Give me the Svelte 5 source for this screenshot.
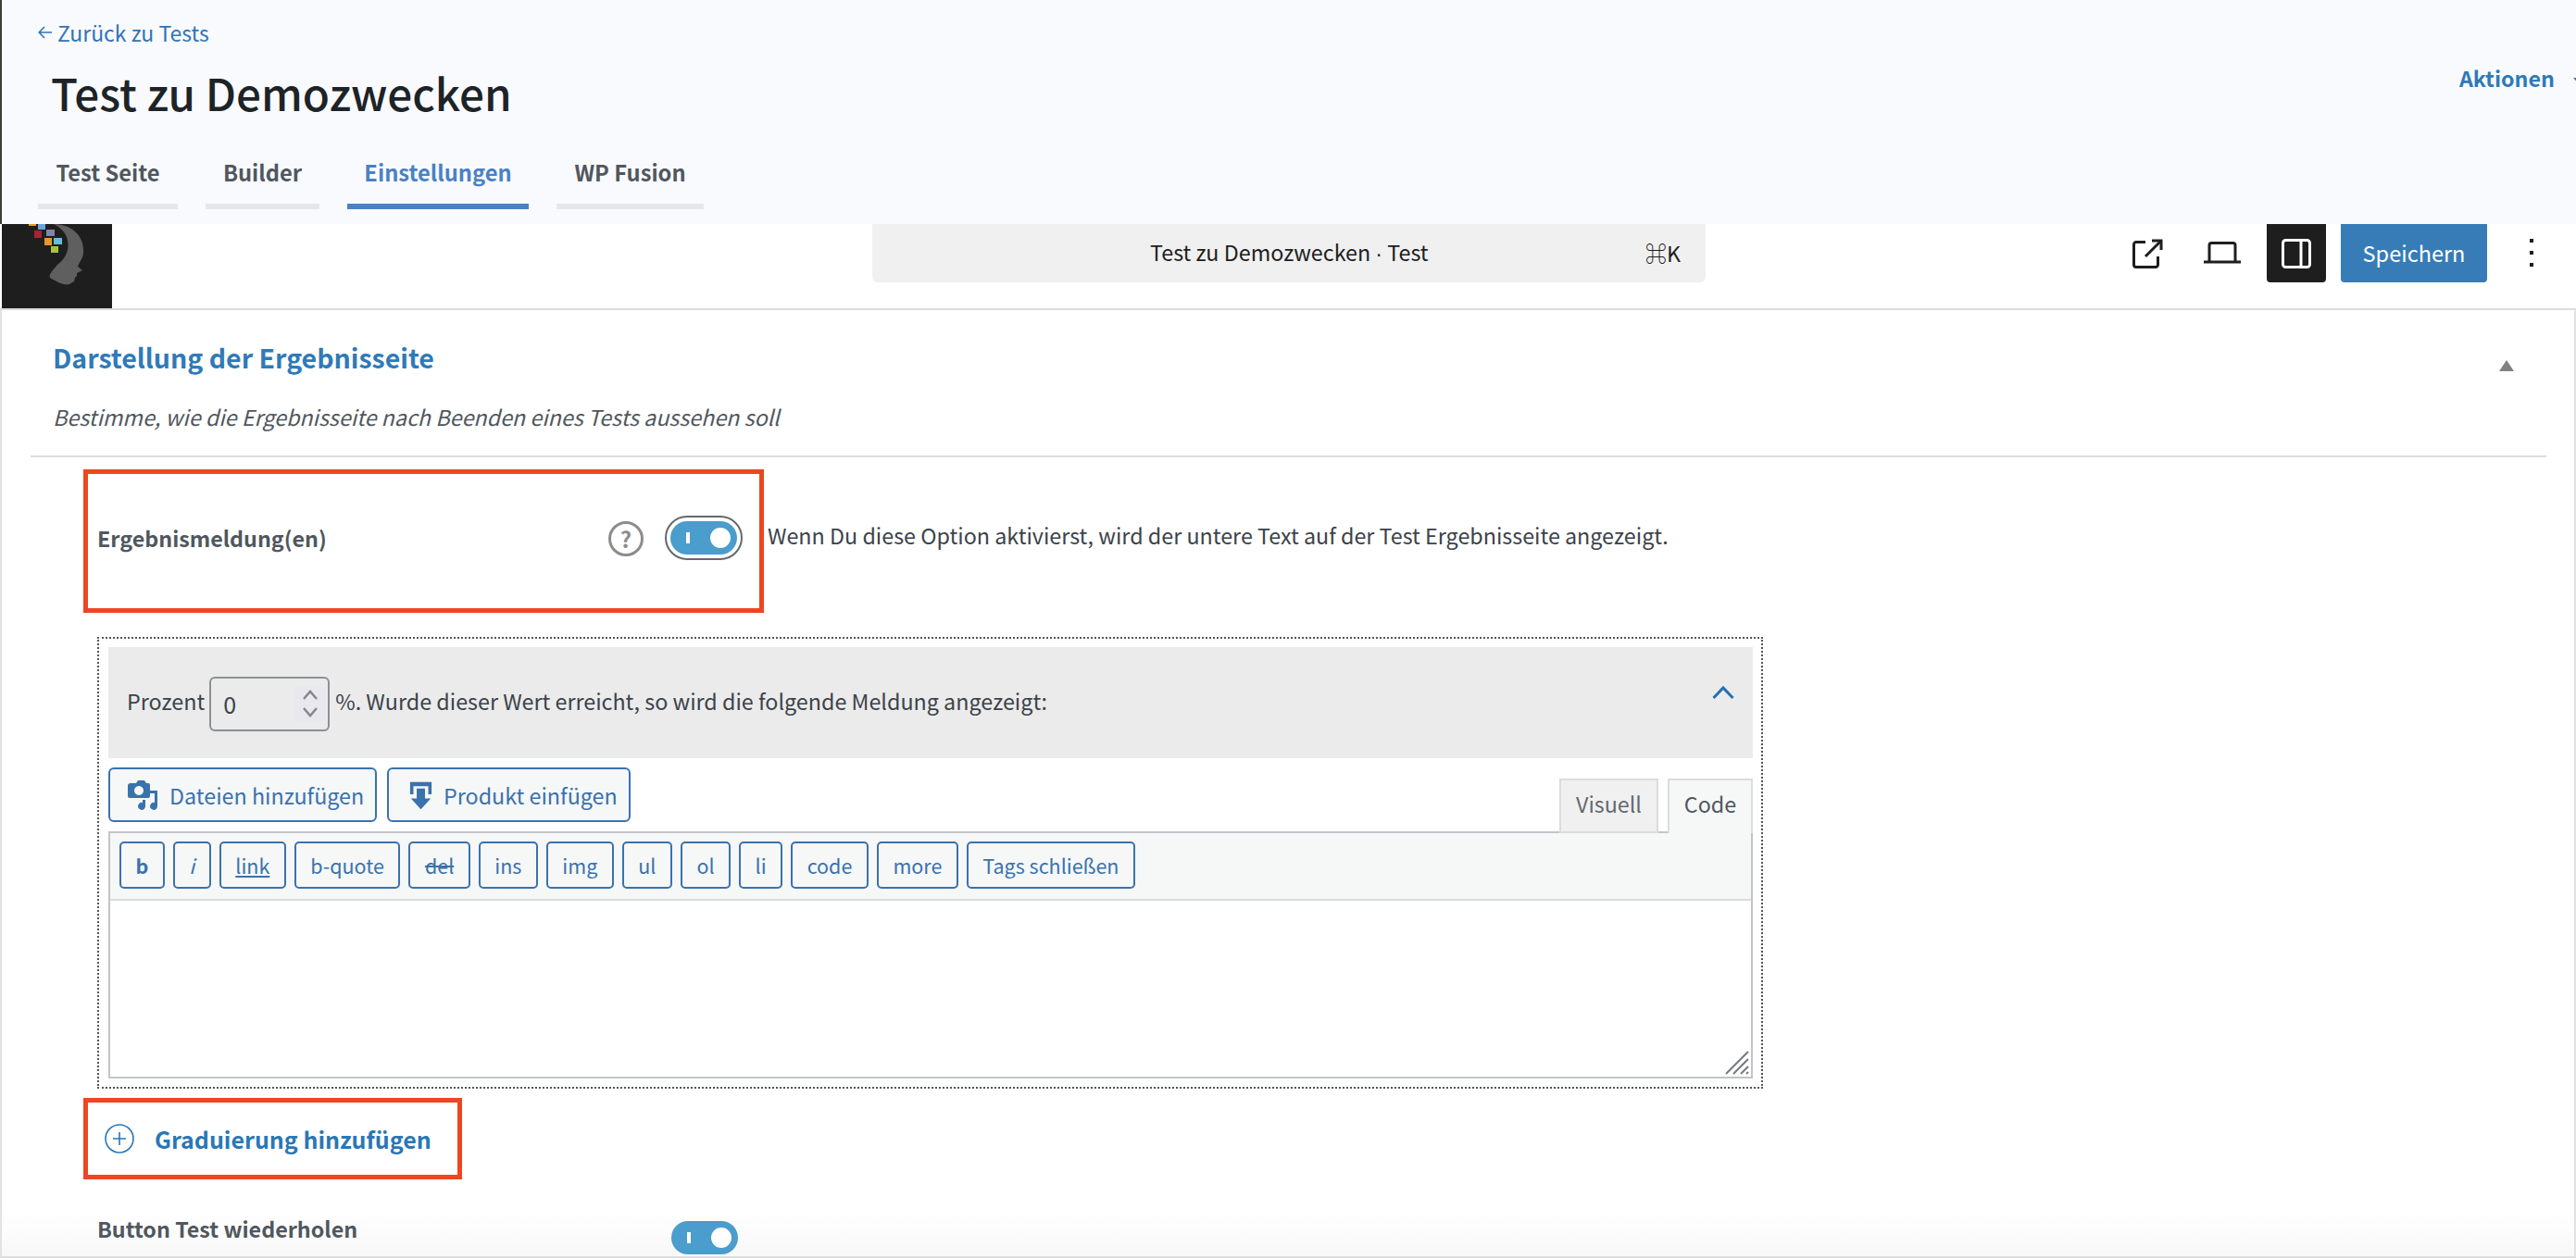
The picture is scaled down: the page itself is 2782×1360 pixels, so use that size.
<script>
  const tabs = [
    { label: "Test Seite", w: 151 },
    { label: "Builder", w: 123 },
    { label: "Einstellungen", w: 196, active: true },
    { label: "WP Fusion", w: 159 }
  ];
  const quicktags = ["b", "i", "link", "b-quote", "del", "ins", "img", "ul", "ol", "li", "code", "more", "Tags schließen"];
</script>

<div class="page">
  <header class="head">
    <a class="back" href="#back">
      <svg width="15" height="14" viewBox="0 0 15 14" fill="none" stroke="#2f75b5" stroke-width="1.6">
        <path d="M7 1 L1.2 7 L7 13 M1.2 7 H15"/>
      </svg>
      Zurück zu Tests
    </a>
    <div class="titlerow">
      <h1>Test zu Demozwecken</h1>
      <a class="actions" href="#actions">Aktionen<span class="caret"></span></a>
    </div>
    <nav class="tabs">
      {#each tabs as t}
        <a href="#tab" class="tab" class:active={t.active} style="width:{t.w}px">{t.label}</a>
      {/each}
    </nav>
  </header>

  <div class="topbar">
    <div class="logo">
      <svg width="119" height="91" viewBox="2 0 119 91">
        <path d="M58 0 C74 0 90 10 90 28 C91 36 86 40 84 46 L89 50 L83 53 L83 56 L81 58 L80 62 L75 65 C70 67 60 62 54 58 C52 55 57 50 62 44 C72 36 76 26 72 14 C70 8 64 3 58 0 Z" fill="#5f5f5f"/>
        <rect x="31" y="0" width="8" height="2" fill="#e59a35"/>
        <rect x="41" y="0" width="8" height="6" fill="#6fa3d8"/>
        <rect x="37" y="7" width="8" height="8" fill="#a5242f"/>
        <rect x="50" y="6" width="9" height="7" fill="#8484a8"/>
        <rect x="48" y="15" width="8" height="8" fill="#e5962f"/>
        <rect x="58" y="15" width="9" height="7" fill="#63bddd"/>
        <rect x="55" y="24" width="8" height="7" fill="#a9c23f"/>
      </svg>
    </div>
    <div class="search">
      <span class="searchtext">Test zu Demozwecken <span class="sep">·</span> Test</span>
      <span class="kbd">⌘K</span>
    </div>
    <div class="tools">
      <svg class="ext" width="34" height="34" viewBox="0 0 34 34" fill="none" stroke="#1e1e1e" stroke-width="3">
        <path d="M15 4.5 H5 a2.5 2.5 0 0 0 -2.5 2.5 V29 a2.5 2.5 0 0 0 2.5 2.5 H26 a2.5 2.5 0 0 0 2.5 -2.5 V20"/>
        <path d="M22 3 H32 V13"/>
        <path d="M31.5 3.5 L15 20"/>
      </svg>
      <svg class="laptop" width="40" height="24" viewBox="0 0 40 24" fill="none" stroke="#1e1e1e" stroke-width="3">
        <path d="M6 21 V4 a2.5 2.5 0 0 1 2.5 -2.5 H31.5 a2.5 2.5 0 0 1 2.5 2.5 V21"/>
        <path d="M0 22 H40"/>
      </svg>
      <button class="panelbtn" aria-label="Einstellungen">
        <svg width="32" height="32" viewBox="0 0 32 32" fill="none" stroke="#fff" stroke-width="3">
          <rect x="1.5" y="1.5" width="29" height="29" rx="3"/>
          <path d="M21 2 V30"/>
        </svg>
      </button>
      <button class="save">Speichern</button>
      <div class="dots"><i></i><i></i><i></i></div>
    </div>
  </div>

  <main class="panel">
    <div class="sectionhead">
      <div>
        <h2>Darstellung der Ergebnisseite</h2>
        <p class="sub">Bestimme, wie die Ergebnisseite nach Beenden eines Tests aussehen soll</p>
      </div>
      <span class="tri"></span>
    </div>

    <div class="content">
      <div class="setting">
        <div class="redbox first">
          <span class="label">Ergebnismeldung(en)</span>
          <span class="help">?</span>
          <span class="toggle ring"><span class="track"><i></i><b></b></span></span>
        </div>
        <span class="desc">Wenn Du diese Option aktivierst, wird der untere Text auf der Test Ergebnisseite angezeigt.</span>
      </div>

      <div class="dotted">
        <div class="greybar">
          <span>Prozent</span>
          <div class="num">
            <span>0</span>
            <div class="spin">
              <svg width="20" height="34" viewBox="0 0 20 34" fill="none" stroke="#85878b" stroke-width="2.5">
                <path d="M3 12 L10 4 L17 12"/>
                <path d="M3 22 L10 30 L17 22"/>
              </svg>
            </div>
          </div>
          <span>%. Wurde dieser Wert erreicht, so wird die folgende Meldung angezeigt:</span>
          <svg class="up" width="24" height="16" viewBox="0 0 24 16" fill="none" stroke="#2271b1" stroke-width="3">
            <path d="M1.5 14 L12 3 L22.5 14"/>
          </svg>
        </div>

        <div class="editorhead">
          <button class="media">
            <svg width="34" height="34" viewBox="0 0 34 34" fill="#3a72ad">
              <path d="M6 4 H10 L12 1 H19 L21 4 H23 a2 2 0 0 1 2 2 V18 a2 2 0 0 1 -2 2 H3 a2 2 0 0 1 -2 -2 V6 a3 3 0 0 1 3 -2 Z M13 7 a5 5 0 1 0 0.01 0 Z" fill-rule="evenodd"/>
              <path d="M25 12 H33 V29 a4 4 0 1 1 -3 -4 V15 H25 Z"/>
              <path d="M20 22 V29 a4 4 0 1 1 -3 -4 V22 Z"/>
            </svg>
            Dateien hinzufügen
          </button>
          <button class="media prod">
            <svg width="25" height="32" viewBox="0 0 28 34" fill="#3a72ad">
              <path d="M1 1 H27 V16 H23 V6 H5 V16 H1 Z"/>
              <path d="M9 9 H19 V21 H26 L14 34 L2 21 H9 Z"/>
            </svg>
            Produkt einfügen
          </button>
          <div class="modes">
            <span class="mode">Visuell</span>
            <span class="mode cur">Code</span>
          </div>
        </div>

        <div class="editor">
          <div class="qt">
            {#each quicktags as q}
              <button class="qbtn q-{q.split(' ')[0]}">{q}</button>
            {/each}
          </div>
          <div class="area">
            <svg class="grip" width="26" height="26" viewBox="0 0 26 26" stroke="#77797c" stroke-width="2">
              <path d="M1 25 L25 1 M9 25 L25 9 M17 25 L25 17 M23 25 L25 23"/>
            </svg>
          </div>
        </div>
      </div>

      <div class="redbox second">
        <svg width="32" height="32" viewBox="0 0 32 32" fill="none" stroke="#2a77b5" stroke-width="1.6">
          <circle cx="16" cy="16" r="15"/>
          <path d="M16 9 V23 M9 16 H23"/>
        </svg>
        <span class="add">Graduierung hinzufügen</span>
      </div>

      <div class="setting last">
        <span class="label wide">Button Test wiederholen</span>
        <span class="toggle"><span class="track"><i></i><b></b></span></span>
      </div>
    </div>
  </main>
</div>

<style>
  :global(body) {
    margin: 0;
    overflow: hidden;
    background: #fff;
  }

  .page {
    width: 2782px;
    height: 1360px;
    overflow: hidden;
    position: relative;
    font-family: "Noto Sans CJK SC", "Noto Sans", sans-serif;
    font-size: 23.3px;
    line-height: 32px;
    color: #50575e;
  }

  a { text-decoration: none; }
  button { font-family: inherit; cursor: pointer; }

  .head {
    height: 242px;
    box-sizing: border-box;
    background: #f9fafe;
    border-left: 2px solid #3c3c3c;
    padding: 19px 0 16px 39px;
    display: flex;
    flex-direction: column;
  }

  .back {
    color: #2f75b5;
    font-size: 23px;
    display: flex;
    align-items: center;
    gap: 6px;
  }

  .titlerow {
    display: flex;
    justify-content: space-between;
    margin-top: 16px;
    padding-left: 14px;
    margin-right: -7px;
  }

  h1 {
    margin: 0;
    font-size: 47.6px;
    line-height: 66px;
    font-weight: 500;
    color: #1d2327;
  }

  .actions {
    color: #2f7ab8;
    font-size: 23.3px;
    font-weight: 700;
    margin-top: 1px;
    white-space: nowrap;
  }

  .caret {
    display: inline-block;
    border-top: 6px solid #2f7ab8;
    border-left: 5px solid transparent;
    border-right: 5px solid transparent;
    vertical-align: 4px;
    margin-left: 20px;
  }

  .tabs {
    display: flex;
    gap: 30px;
    margin-top: auto;
  }

  .tab {
    box-sizing: border-box;
    text-align: center;
    font-weight: 700;
    font-size: 23.7px;
    color: #50575e;
    padding-bottom: 18px;
    border-bottom: 6px solid #e4e8eb;
  }

  .tab.active {
    color: #4a81c4;
    border-bottom-color: #4a81c4;
  }

  .topbar {
    height: 91px;
    display: grid;
    grid-template-columns: 942px 900px 1fr;
    border-bottom: 2px solid #dcdcdc;
    background: #fff;
  }

  .logo {
    width: 119px;
    height: 91px;
    margin-left: 2px;
    background: #1e1e1e;
  }

  .logo svg { display: block; }

  .search {
    height: 63px;
    box-sizing: border-box;
    padding-bottom: 2px;
    background: #f0f0f0;
    border-radius: 0 0 6px 6px;
    display: flex;
    align-items: center;
    color: #1e1e1e;
    font-size: 23.3px;
  }

  .searchtext { margin-left: 300px; }
  .sep { font-family: "Liberation Sans", sans-serif; }
  .kbd { margin-left: auto; margin-right: 27px; }

  .tools {
    display: flex;
    align-items: flex-start;
    position: relative;
    height: 63px;
  }

  .ext { margin: 15px 0 0 460px; }
  .laptop { margin: 19px 0 0 44px; }

  .panelbtn {
    margin-left: 28px;
    width: 64px;
    height: 63px;
    border: 0;
    padding: 0;
    background: #1e1e1e;
    border-radius: 0 0 4px 4px;
    display: flex;
    align-items: center;
    justify-content: center;
  }

  .save {
    margin-left: 16px;
    width: 158px;
    height: 63px;
    border: 0;
    padding: 0 0 2px;
    background: #377cb6;
    color: #fff;
    font-size: 23.5px;
    border-radius: 0 0 4px 4px;
  }

  .dots {
    margin: 16px 0 0 46px;
    display: flex;
    flex-direction: column;
    gap: 9px;
  }

  .dots i {
    display: block;
    width: 4px;
    height: 4px;
    background: #1e1e1e;
  }

  .panel {
    border-left: 2px solid #e2e2e2;
    border-right: 2px solid #e2e2e2;
    height: 1024px;
    box-sizing: border-box;
    border-bottom: 2px solid #dcdcdc;
    background: linear-gradient(#fff calc(100% - 50px), #f8f8f8);
  }

  .sectionhead {
    display: flex;
    justify-content: space-between;
    padding: 29px 65px 0 55px;
    height: 159px;
    box-sizing: border-box;
    position: relative;
  }

  .sectionhead::after {
    content: "";
    position: absolute;
    left: 31px;
    right: 30px;
    bottom: 0;
    height: 2px;
    background: #dcdcde;
  }

  h2 {
    margin: 0;
    font-size: 28.5px;
    line-height: 44px;
    font-weight: 600;
    color: #2f7ab8;
  }

  .sub {
    margin: 26px 0 0;
    font-size: 23.3px;
    font-style: italic;
    color: #50575e;
  }

  .tri {
    width: 0;
    height: 0;
    margin-top: 25px;
    border-bottom: 12px solid #7e8186;
    border-left: 8px solid transparent;
    border-right: 8px solid transparent;
  }

  .content {
    padding: 13px 0 0 88px;
  }

  .setting {
    display: flex;
    align-items: center;
  }

  .redbox {
    border: 5px solid #ee4620;
    box-sizing: border-box;
    display: flex;
    align-items: center;
  }

  .redbox.first {
    width: 735px;
    height: 155px;
    padding: 0 0 0 10px;
  }

  .label {
    font-weight: 700;
    color: #50575e;
    width: 552px;
    margin-top: -7px;
  }

  .label.wide { width: 620px; }

  .help {
    width: 32px;
    height: 32px;
    border: 3px solid #8c8c8c;
    border-radius: 50%;
    color: #8c8c8c;
    font-weight: 700;
    font-size: 24px;
    line-height: 32px;
    text-align: center;
    margin-top: -6px;
  }

  .toggle {
    display: inline-flex;
  }

  .toggle.ring {
    border: 2px solid #646970;
    padding: 4px;
    border-radius: 26px;
    margin: -8px 0 0 23px;
  }

  .track {
    width: 72px;
    height: 36px;
    border-radius: 18px;
    background: #4a9dcc;
    position: relative;
    display: block;
  }

  .track i {
    position: absolute;
    left: 17px;
    top: 12px;
    width: 4px;
    height: 12px;
    background: #fff;
  }

  .track b {
    position: absolute;
    right: 7px;
    top: 7px;
    width: 22px;
    height: 22px;
    background: #fff;
    border-radius: 50%;
  }

  .desc {
    margin: -14px 0 0 4px;
    color: #3c434a;
  }

  .dotted {
    width: 1799px;
    height: 488px;
    box-sizing: border-box;
    margin: 26px 0 0 15px;
    border: 2px dotted #555;
    padding: 9px 9px 0 10px;
  }

  .greybar {
    height: 120px;
    background: #ebebeb;
    display: flex;
    align-items: center;
    padding-left: 20px;
    color: #3c434a;
    box-sizing: border-box;
  }

  .greybar > span { margin-top: -4px; }

  .num {
    width: 130px;
    height: 59px;
    box-sizing: border-box;
    margin: 2px 6px 0 5px;
    border: 2px solid #8c8f94;
    border-radius: 6px;
    display: flex;
    align-items: center;
    justify-content: space-between;
    padding: 0 2px 0 13px;
    font-size: 25px;
  }

  .spin {
    width: 34px;
    height: 37px;
    background: #e8e8ee;
    display: flex;
    align-items: center;
    justify-content: center;
  }

  .up { margin: -22px 20px 0 auto; }

  .editorhead {
    display: flex;
    gap: 11px;
    margin-top: 10px;
    height: 69px;
  }

  .media {
    height: 59px;
    width: 290px;
    box-sizing: border-box;
    border: 2px solid #3a72ad;
    border-radius: 6px;
    background: #f6f7f7;
    color: #3a72ad;
    font-size: 23.3px;
    white-space: nowrap;
    display: flex;
    align-items: center;
    gap: 12px;
    padding: 0 0 0 18px;
  }

  .media.prod {
    width: 263px;
    padding-left: 22px;
  }

  .modes {
    margin-left: auto;
    display: flex;
    gap: 10px;
    align-items: flex-end;
    position: relative;
    z-index: 1;
    margin-top: 12px;
    height: 59px;
  }

  .mode {
    box-sizing: border-box;
    height: 59px;
    border: 2px solid #dcdcde;
    background: #f0f0f1;
    text-align: center;
    line-height: 50px;
    width: 107px;
    color: #646970;
  }

  .mode.cur {
    width: 92px;
    background: #f6f7f7;
    border-bottom: 0;
    color: #50575e;
  }

  .editor {
    border: 2px solid #c3c4c7;
    height: 267px;
    box-sizing: border-box;
    background: #fff;
  }

  .qt {
    height: 73px;
    box-sizing: border-box;
    background: #f6f7f7;
    border-bottom: 2px solid #dcdcde;
    padding: 9px 0 0 10px;
    display: flex;
    gap: 9px;
  }

  .qbtn {
    height: 51px;
    box-sizing: border-box;
    padding: 0 15.5px;
    border: 2px solid #3a72ad;
    border-radius: 5px;
    background: #f6f7f7;
    color: #3a72ad;
    font-size: 21.5px;
    line-height: 30px;
  }

  .q-b { font-weight: 700; }
  .q-i { font-style: italic; }
  .q-link { text-decoration: underline; }
  .q-del { text-decoration: line-through; }

  .area {
    height: 190px;
    position: relative;
  }

  .grip {
    position: absolute;
    right: 2px;
    bottom: 2px;
  }

  .redbox.second {
    width: 409px;
    height: 88px;
    margin: 10px 0 0 0;
    padding-left: 18px;
    gap: 22px;
  }

  .add {
    font-weight: 700;
    font-size: 25px;
    color: #2a77b5;
  }

  .setting.last {
    margin: 37px 0 0 15px;
    align-items: flex-start;
  }

  .setting.last .label { margin-top: 0; }
  .setting.last .toggle { margin-top: 8px; }
</style>
